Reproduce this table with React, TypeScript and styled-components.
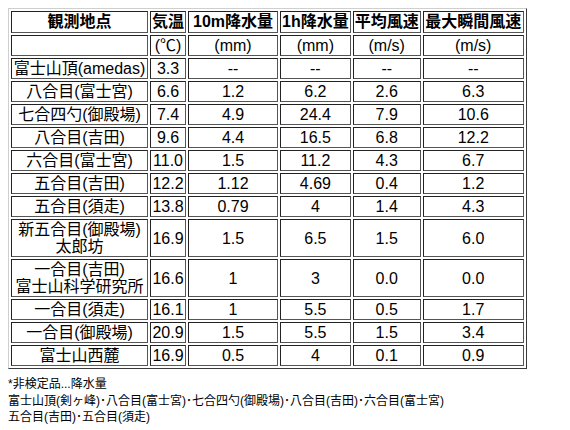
import { createGlobalStyle } from "styled-components";
import styled from "styled-components";

const GlobalStyle = createGlobalStyle`
  html, body {
    margin: 0;
    background: #fff;
  }
  body {
    padding: 8px;
    color: #000;
    font-family: "Liberation Sans", "Noto Sans CJK JP", sans-serif;
  }
`;

const Table = styled.table`
  border-collapse: separate;
  border-spacing: 2px;
  border: 1px solid;
  border-color: #cfcfcf #3a3a3a #3a3a3a #cfcfcf;
  font-size: 16px;
`;

const HeadCell = styled.th<{ $w: number }>`
  width: ${p => p.$w}px;
  padding: 1px;
  border: 1px solid;
  border-color: #222 #555 #555 #222;
  font-weight: bold;
  line-height: 18px;
  text-align: center;
  white-space: nowrap;
`;

const Cell = styled.td`
  padding: 1px;
  border: 1px solid;
  border-color: #222 #555 #555 #222;
  line-height: 17px;
  text-align: center;
  white-space: nowrap;
`;

const Note = styled.div`
  margin-top: 7px;
  font-size: 12px;
  line-height: 16.5px;
`;

const headers: [string, number][] = [
  ["観測地点", 133],
  ["気温", 31],
  ["10m降水量", 86],
  ["1h降水量", 65],
  ["平均風速", 63],
  ["最大瞬間風速", 97],
];

const rows: string[][] = [
  ["", "(℃)", "(mm)", "(mm)", "(m/s)", "(m/s)"],
  ["富士山頂(amedas)", "3.3", "--", "--", "--", "--"],
  ["八合目(富士宮)", "6.6", "1.2", "6.2", "2.6", "6.3"],
  ["七合四勺(御殿場)", "7.4", "4.9", "24.4", "7.9", "10.6"],
  ["八合目(吉田)", "9.6", "4.4", "16.5", "6.8", "12.2"],
  ["六合目(富士宮)", "11.0", "1.5", "11.2", "4.3", "6.7"],
  ["五合目(吉田)", "12.2", "1.12", "4.69", "0.4", "1.2"],
  ["五合目(須走)", "13.8", "0.79", "4", "1.4", "4.3"],
  ["新五合目(御殿場)\n太郎坊", "16.9", "1.5", "6.5", "1.5", "6.0"],
  ["一合目(吉田)\n富士山科学研究所", "16.6", "1", "3", "0.0", "0.0"],
  ["一合目(須走)", "16.1", "1", "5.5", "0.5", "1.7"],
  ["一合目(御殿場)", "20.9", "1.5", "5.5", "1.5", "3.4"],
  ["富士山西麓", "16.9", "0.5", "4", "0.1", "0.9"],
];

function Lines({ text }: { text: string }) {
  const parts = text.split("\n");
  return (
    <>
      {parts.map((p, i) => (
        <span key={i}>
          {i > 0 && <br />}
          {p}
        </span>
      ))}
    </>
  );
}

export default function App() {
  return (
    <>
      <GlobalStyle />
      <Table>
        <thead>
          <tr>
            {headers.map(([label, w]) => (
              <HeadCell key={label} $w={w}>{label}</HeadCell>
            ))}
          </tr>
        </thead>
        <tbody>
          {rows.map((row, r) => (
            <tr key={r}>
              {row.map((v, c) => (
                <Cell key={c}>{v ? <Lines text={v} /> : "\u00a0"}</Cell>
              ))}
            </tr>
          ))}
        </tbody>
      </Table>
      <Note>
        *非検定品...降水量
        <br />
        富士山頂(剣ヶ峰)･八合目(富士宮)･七合四勺(御殿場)･八合目(吉田)･六合目(富士宮)
        <br />
        五合目(吉田)･五合目(須走)
      </Note>
    </>
  );
}
